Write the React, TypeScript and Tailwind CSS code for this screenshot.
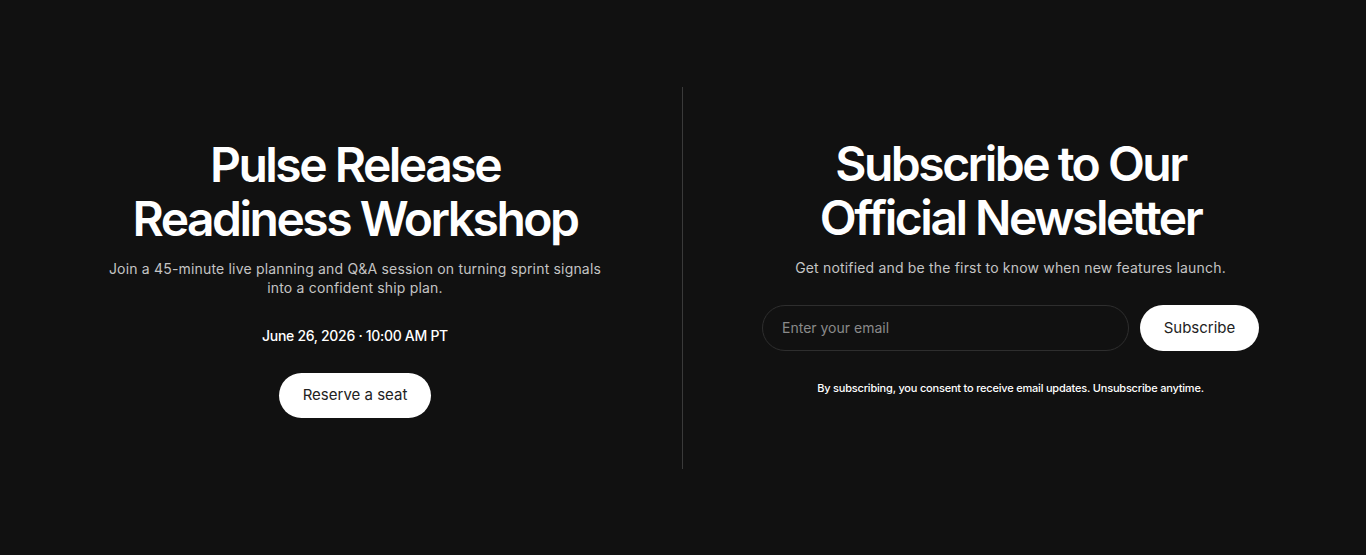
export default function App() {
  return (
    <div
      className="min-h-screen w-full bg-[#111111] flex items-center justify-center"
      style={{ fontFamily: 'Inter, "Noto Sans", sans-serif' }}
    >
      <div className="w-full max-w-[1310px] grid grid-cols-2 h-[382px]">
        {/* Workshop */}
        <div className="flex flex-col items-center justify-center text-center border-r border-[#3a3a3a] px-8">
          <h2 className="text-[48px] leading-[54px] font-semibold tracking-[-0.052em] text-white">
            Pulse Release
            <br />
            Readiness Workshop
          </h2>
          <p className="mt-[13px] max-w-[510px] text-[14px] leading-[19px] tracking-[0.18px] text-[#c4c4c4]">
            Join a 45-minute live planning and Q&amp;A session on turning sprint signals into a confident ship plan.
          </p>
          <p className="mt-[28px] text-[14px] font-medium tracking-[-0.3px] text-white">June 26, 2026 · 10:00 AM PT</p>
          <button className="mt-[27px] h-[45px] px-6 rounded-full bg-white text-[#222222] text-[15px]">
            Reserve a seat
          </button>
        </div>

        {/* Newsletter */}
        <div className="flex flex-col items-center justify-center text-center px-8 pb-[22px]">
          <h2 className="text-[48px] leading-[54px] font-semibold tracking-[-0.052em] text-white">
            Subscribe to Our
            <br />
            Official Newsletter
          </h2>
          <p className="mt-[13px] text-[14px] leading-[19px] tracking-[0.18px] text-[#c4c4c4]">
            Get notified and be the first to know when new features launch.
          </p>
          <form className="mt-[28px] flex items-center gap-[11px]" onSubmit={e => e.preventDefault()}>
            <input
              type="email"
              placeholder="Enter your email"
              className="w-[367px] h-[46px] rounded-full border border-[#2e2e2e] bg-transparent px-[19px] text-[14px] text-white placeholder:text-[#8a8a8a] outline-none"
            />
            <button className="h-[46px] w-[119px] rounded-full bg-white text-[#222222] text-[15px]">
              Subscribe
            </button>
          </form>
          <p className="mt-[29px] text-[11px] font-medium tracking-[-0.2px] text-white">
            By subscribing, you consent to receive email updates. Unsubscribe anytime.
          </p>
        </div>
      </div>
    </div>
  )
}
